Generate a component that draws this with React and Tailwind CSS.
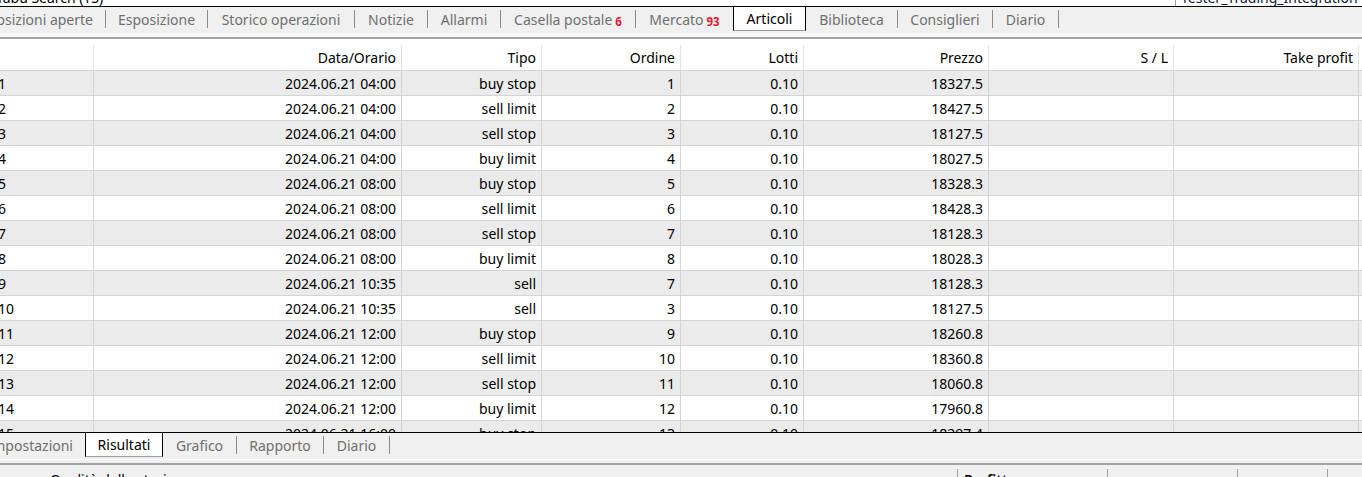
import React from 'react';

const font = { fontFamily: '"Noto Sans", "Liberation Sans", sans-serif' };

const topTabs = [
    { label: 'Posizioni aperte', w: 'w-[106px]', first: true },
    { label: 'Esposizione', w: 'w-[102px]' },
    { label: 'Storico operazioni', w: 'w-[147px]' },
    { label: 'Notizie', w: 'w-[73px]' },
    { label: 'Allarmi', w: 'w-[73px]' },
    { label: 'Casella postale', badge: '6', w: 'w-[135px]' },
    { label: 'Mercato', badge: '93', w: 'w-[97px]', noSep: true },
    { label: 'Articoli', w: 'w-[73px]', active: true },
    { label: 'Biblioteca', w: 'w-[92px]' },
    { label: 'Consiglieri', w: 'w-[95px]' },
    { label: 'Diario', w: 'w-[66px]' },
];

const bottomTabs = [
    { label: 'Impostazioni', w: 'w-[85px]', first: true, noSep: true },
    { label: 'Risultati', w: 'w-[78px]', active: true },
    { label: 'Grafico', w: 'w-[74px]' },
    { label: 'Rapporto', w: 'w-[87px]' },
    { label: 'Diario', w: 'w-[66px]' },
];

const rows = [
    ['1', '2024.06.21 04:00', 'buy stop', '1', '0.10', '18327.5'],
    ['2', '2024.06.21 04:00', 'sell limit', '2', '0.10', '18427.5'],
    ['3', '2024.06.21 04:00', 'sell stop', '3', '0.10', '18127.5'],
    ['4', '2024.06.21 04:00', 'buy limit', '4', '0.10', '18027.5'],
    ['5', '2024.06.21 08:00', 'buy stop', '5', '0.10', '18328.3'],
    ['6', '2024.06.21 08:00', 'sell limit', '6', '0.10', '18428.3'],
    ['7', '2024.06.21 08:00', 'sell stop', '7', '0.10', '18128.3'],
    ['8', '2024.06.21 08:00', 'buy limit', '8', '0.10', '18028.3'],
    ['9', '2024.06.21 10:35', 'sell', '7', '0.10', '18128.3'],
    ['10', '2024.06.21 10:35', 'sell', '3', '0.10', '18127.5'],
    ['11', '2024.06.21 12:00', 'buy stop', '9', '0.10', '18260.8'],
    ['12', '2024.06.21 12:00', 'sell limit', '10', '0.10', '18360.8'],
    ['13', '2024.06.21 12:00', 'sell stop', '11', '0.10', '18060.8'],
    ['14', '2024.06.21 12:00', 'buy limit', '12', '0.10', '17960.8'],
    ['15', '2024.06.21 16:00', 'buy stop', '13', '0.10', '18297.4'],
];

const headers = ['', 'Data/Orario', 'Tipo', 'Ordine', 'Lotti', 'Prezzo', 'S / L', 'Take profit', ''];

const grid = 'grid grid-cols-[94px_308px_140px_139px_123px_185px_185px_185px_1fr]';

const TabBar = ({ tabs }) => (
    <div className="flex h-[27px] items-stretch border-t border-black bg-[#f0f0f0] text-[14px]">
        {tabs.map((tab, i) => {
            const next = tabs[i + 1];
            const showSep = !tab.active && !tab.noSep && !(next && next.active);
            if (tab.active) {
                return (
                    <div
                        key={i}
                        className={`${tab.w} -mt-px flex h-[25px] shrink-0 items-center justify-center border border-black border-b-[#9a9a9a] bg-white text-black`}
                    >
                        {tab.label}
                    </div>
                );
            }
            return (
                <div key={i} className={`${tab.w} flex shrink-0 items-center overflow-hidden pb-[2px]`}>
                    <div
                        className={`flex min-w-0 flex-1 items-center whitespace-nowrap text-[#6f6f6f] ${
                            tab.first ? 'justify-end pr-3' : 'justify-center'
                        }`}
                    >
                        {tab.label}
                        {tab.badge && (
                            <span className="ml-[3px] mt-[5px] text-[11.5px] font-bold text-[#e8182c]">{tab.badge}</span>
                        )}
                    </div>
                    {showSep && <div className="h-[18px] w-px shrink-0 bg-[#8c8c8c]" />}
                </div>
            );
        })}
    </div>
);

const App = () => {
    return (
        <div className="h-[477px] w-[1362px] overflow-hidden bg-white text-black" style={font}>
            {/* clipped strip above the tabs */}
            <div className="flex h-[6px] overflow-hidden text-[14px] leading-[20px]">
                <div className="-ml-[4px] -mt-[12px] w-[1179px] whitespace-nowrap">Tabu Search (TS)</div>
                <div className="-mt-[12px] whitespace-nowrap border-l border-[#a0a0a0] pl-[5px] text-[#10203a]">
                    Tester_Trading_Integration
                </div>
            </div>

            <TabBar tabs={topTabs} />

            <div className="h-[4px] bg-[#f9f9f9]" />
            <div className="h-[2px] bg-[#a3a3a3]" />
            <div className="h-px bg-white" />

            {/* orders table */}
            <div className="h-[392px] overflow-hidden bg-white text-[14px]">
                <div className={`${grid} h-[31px] border-b border-[#d4d4d4]`}>
                    {headers.map((h, i) => (
                        <div key={i} className="flex items-end">
                            <div className="flex h-[25px] flex-1 items-center justify-end border-r border-[#e3e3e3] pr-[5px]">
                                {h}
                            </div>
                        </div>
                    ))}
                </div>
                {rows.map((r, idx) => (
                    <div
                        key={idx}
                        className={`${grid} h-[25px] border-b border-[#d4d4d4] ${idx % 2 === 0 ? 'bg-[#ebebeb]' : 'bg-white'}`}
                    >
                        <div className="-ml-[2px] flex items-center border-r border-[#d4d4d4] pt-[1px]">{r[0]}</div>
                        {r.slice(1).map((c, j) => (
                            <div key={j} className="flex items-center justify-end border-r border-[#d4d4d4] pr-[5px] pt-[1px]">
                                {c}
                            </div>
                        ))}
                        <div className="border-r border-[#d4d4d4]" />
                        <div className="border-r border-[#d4d4d4]" />
                        <div />
                    </div>
                ))}
            </div>

            <TabBar tabs={bottomTabs} />

            <div className="h-px bg-white" />
            <div className="h-[3px] bg-[#f0f0f0]" />
            <div className="h-[2px] bg-[#a3a3a3]" />

            {/* results summary, mostly out of view */}
            <div className="flex h-[12px] overflow-hidden bg-[#f0f0f0] pt-[4px] text-[14px] leading-[20px]">
                <div className="w-[957px] shrink-0 pl-[50px]">
                    <div className="mt-[1px] whitespace-nowrap">Qualità dello storico</div>
                </div>
                <div className="w-[150px] shrink-0 border-l border-[#a0a0a0] pl-[6px]">
                    <div className="mt-[1px] whitespace-nowrap font-semibold">Profitto</div>
                </div>
                <div className="w-[130px] shrink-0 border-l border-[#a0a0a0]" />
                <div className="w-[90px] shrink-0 border-l border-[#a0a0a0]" />
                <div className="flex-1 border-l border-[#a0a0a0]" />
            </div>
        </div>
    );
};

export default App;
